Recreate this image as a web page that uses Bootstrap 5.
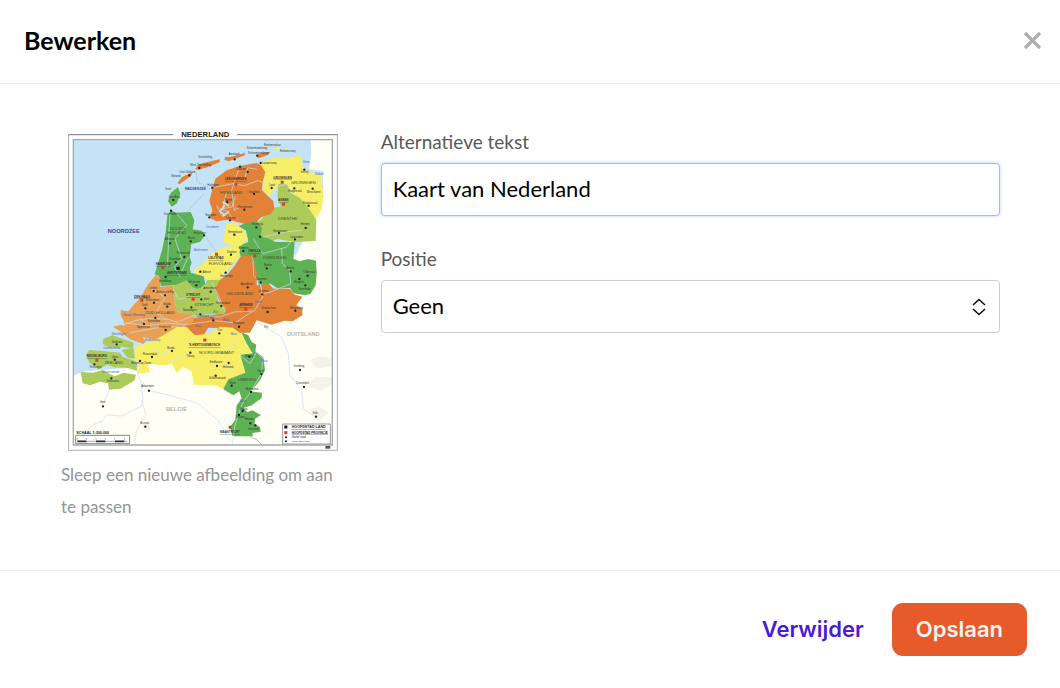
<!DOCTYPE html>
<html lang="nl">
<head>
<meta charset="utf-8">
<meta name="viewport" content="width=device-width, initial-scale=1">
<title>Bewerken</title>
<link rel="stylesheet" href="https://cdn.jsdelivr.net/npm/bootstrap@5.3.0/dist/css/bootstrap.min.css">
<style>
body{font-family:Lato,"Open Sans",sans-serif;color:#000;background:#fff}
.dialog-head{height:84px;padding:0 18px 4px 24px;border-bottom:1px solid #ececec}
.dialog-head h1{font-size:25px;line-height:32px;font-weight:700}
.close-btn{width:20px;height:20px;color:#b0b0b0}
.dialog-main{padding:45px 60px 40px 61px}
.dialog-main .row{--bs-gutter-x:20px}
.map-art{width:270px;max-width:100%;margin-left:7px}
.hint{font-size:17px;line-height:32px;color:#959595;margin-top:8px}
.field-name{font-size:19px;line-height:26px;color:#595959;margin-bottom:8px}
.field-box{height:53px;font-size:22px;line-height:32px;color:#000;padding:0 11px 2px;border-radius:4px;border:1px solid #c8ccd4}
.field-box.active-box,.field-box.active-box:focus{border-color:#a3b8f8;box-shadow:0 0 3px 1px #d5e0ff;color:#000}
.form-select.field-box{background-image:url("data:image/svg+xml,%3Csvg xmlns='http://www.w3.org/2000/svg' viewBox='0 0 14 18' fill='none' stroke='%23111' stroke-width='1.6'%3E%3Cpath d='M1 7l6-5.500 6 5.500M1 11l6 5.500 6-5.500'/%3E%3C/svg%3E");background-size:14px 18px;background-position:right 13px center}
.field-gap{margin-bottom:30px}
.dialog-foot{height:118px;padding:0 33px 0 24px;border-top:1px solid #ececec;gap:4px}
.dialog-foot .btn{font-family:Inter,sans-serif;font-weight:600;font-size:22px;line-height:32px;height:53px;padding:0 24px 2px}
.btn-remove{color:#4a1bd8}
.btn-save{background:#e75a2a;color:#f6f2f0;border-radius:11px}
.btn-save:hover{background:#d24d20;color:#fff}
.map-art text{font-family:"Liberation Sans",Arial,sans-serif}
</style>
</head>
<body>
<main class="d-flex flex-column min-vh-100">
<header class="dialog-head d-flex align-items-center justify-content-between">
<h1 class="m-0">Bewerken</h1>
<button type="button" class="close-btn btn p-0 border-0 d-flex" aria-label="Sluiten"><svg width="20" height="20" viewBox="0 0 20 20" stroke="currentColor" stroke-width="3.4" aria-hidden="true"><path d="M3 3l15 15M18 3l-15 15"/></svg></button>
</header>
<form class="dialog-main flex-grow-1">
<div class="row">
<div class="col-4 pe-4">
<svg class="map-art d-block" viewBox="24 21 810 966" role="img" aria-label="Kaart van Nederland">
<path d="M340 38H25.500V985.500H832.500V38H531" fill="none" stroke="#777" stroke-width="3"/>
<path d="M25.500 40V985.500H832.500V40" fill="none" stroke="#bbb" stroke-width="4"/>
<text x="364" y="44" font-size="23" font-weight="700" fill="#222">NEDERLAND</text>
<path d="M40 53H817V969H40z" fill="#c5e3f7"/>
<!-- land around the country -->
<path d="M40 760L75 748L240 735L600 590L745 330L790 210L789 170L750 168L748 132L754 98L752 53H817V969H40z" fill="#fffff5"/>
<path d="M737 140l52 8v24l-24-3-22-14z" fill="#c5e3f7"/>
<path d="M748 715l30-12 39 6v22l-45 9zM745 790l18-24 54-2v22l-34 20zM750 860l32-5 24 18-22 18-25-8zM245 908l20-3 10 8-8 18-15-4z" fill="#f3f3e9"/>
<!-- Groningen, Drenthe -->
<path d="M602 122L640 108L690 106L722 101L727 130L742 146L787 165L786 190L790 220L785 262L767 292L740 250L700 215L680 187H655L628 222L612 210L606 178z" fill="#f6ee66"/>
<path d="M655 186h25l12 26 28 17 23 26 26 38-2 64-65 3-48-9-32 12-37-21-2-38 20-10 24-35 35-5-10-32z" fill="#abcb5b"/>
<!-- Friesland and the islands -->
<path d="M458 197L466 170L500 145L540 132L590 123L603 130L616 150L608 180L606 205L640 238L643 262L632 277L603 286L590 300L556 306L505 293L470 298L449 287L457 265L448 238z" fill="#e38237"/>
<path d="M352 183L366 165L398 150L393 162L371 178L358 187zM405 140L418 126L455 117L478 112L480 120L444 135L414 144zM494 105l16 0 46-13-2 8-48 18-12-4zM588 100l18-8 26-3-10 11-27 9z" fill="#e38237"/>
<path d="M640 78l15-2 8 6-14 2zM672 76l16 2-10 4z" fill="#f6ee66"/>
<!-- Overijssel -->
<path d="M555 304L590 298L606 318L602 342L628 351L646 360H704L700 410L718 418L745 411L768 416L770 455L767 490L752 515L735 520L700 514L690 498L655 500L632 485L598 490L585 460L582 420L575 402L545 408L534 384L540 370L565 360L558 325L530 315z" fill="#5fb254"/>
<!-- Noord-Holland and Texel -->
<path d="M354 195L361 215L350 245L335 254L324 238L332 213zM333 263L348 272L392 270L403 295L398 322L425 326L435 340L420 360L394 366L389 405L395 422L389 438L393 453L430 460L436 486L416 505L390 492L378 477L348 490L302 492L297 462L284 457L306 385L317 330L322 280z" fill="#5fb254"/>
<!-- Flevoland -->
<path d="M497 308L520 301L550 322L564 350L544 371L512 371L490 360zM402 445L425 428L455 395L486 378L530 371L540 382L536 407L498 450L472 480L456 482L430 462L405 456z" fill="#f6ee66"/>
<!-- Gelderland, Utrecht, Zuid-Holland -->
<path d="M574 402L590 450L590 490L626 485L640 500H690L702 517L727 524L709 550L727 560V580L698 598L674 596L635 608L590 595L570 632L544 632L510 640L480 618L445 617L430 640H395L365 622L400 588L480 575L487 555L462 500L470 480L500 460L525 430L543 402z" fill="#e38237"/>
<path d="M340 492L380 475L403 500L430 498L442 474L480 473L466 500L475 540L497 557L494 576L415 578L400 586L378 574L353 570L344 540z" fill="#abcb5b"/>
<path d="M288 458L302 470L300 494L339 492L345 545L354 570L402 578L400 600L360 618L330 640L280 652L227 642L196 620L190 595L182 580V565L205 568L212 559L240 528L263 488zM159 614L185 608L228 627L258 657L250 666L210 652L180 628z" fill="#eb9f55"/>
<!-- Noord-Brabant and Limburg -->
<path d="M225 675L290 652L350 615H380L405 640L445 635L480 614L518 617L545 636L560 670L580 690L541 698L556 754L505 772L495 803L468 790L402 788L394 748L370 735L350 752L335 724L320 730L292 728L262 724L270 750L232 756L237 730L222 712z" fill="#f6ee66"/>
<path d="M543 630L565 640L575 660L589 668L586 688L610 706L615 744L600 775L573 808L606 812L605 828L575 850L550 858L562 870L577 865L603 879L585 890L584 905L600 915L602 930L578 933V943L518 943L510 915L526 893L530 850L545 830L538 808L520 820L490 802L505 772L556 752L541 698L578 694L560 665z" fill="#5fb254"/>
<!-- Zeeland -->
<path d="M130 650L158 640L221 662L219 680L185 674L148 677L128 665zM78 698L88 684L128 687L180 692L188 704L227 718L233 747L200 737L160 736L142 727L118 742L88 722zM62 750L100 752L125 745L165 763L190 752L228 758L224 775L182 800L147 803L144 784L120 779L90 790L68 784zM184 684l36-7 5 33-22-3z" fill="#abcb5b"/>
<!-- rivers, borders and coast details -->
<g fill="none" stroke="#c5e3f7" stroke-width="2">
<path d="M458 197l60-12 35 6 40-15 60 17 45-10M500 210l-12 50 28-5 10-32M535 145l-20 60 8 60 17-10M480 260l22 8 15 20M470 250l15 30M553 175l10-38 28 5M610 345l65-15 50-5M580 350l28 45 72-20 15-18M665 380l2 45 22 20 3 40-60 25-25 5-6-30-20-25-2-40M602 490l6 35-25 42-60 3-45 15-75-5-50 20-30-8-45-3-50 6-35 12M195 603l70 8 60-8 50 5 90-12 60 7 52-35M210 632l85-15 60-3M540 700l30 25 20-35 18 20-3 44-30 50-30 45-20 60-8 57M330 275l-8 160M350 275l30 35-35 40 20 60-22 25 18 30M384 405l-18 42M340 502l15 30 25-5 20-25M455 480l20 40 20 50M275 500l40 25-25 45 30 25M240 590l20 15M275 680l40 20 20-40M500 690l30-30M515 760l-20-40M335 720l50-25"/>
</g>
<path d="M495 250l-15 18 16 12M507 268l-20 15M488 240l20 12" fill="none" stroke="#c5e3f7" stroke-width="5"/>
<path d="M230 745l12 35 7 48-5 25-30 14-30 15-45-3-12 18-30 12-25 30-32 15M245 835l12 42-28 50-7 42M242 775l25 30 80 20 65 18 60 50 40 65M590 600l75 45 20 50 5 65 35 45 5 55 55 40 30 22M148 805l-15 32" fill="none" stroke="#d6e9f5" stroke-width="3"/>
<path d="M410 150v28l55 30M432 215l-60 65M432 335l65 100" fill="none" stroke="#8fa8b8" stroke-width="2" stroke-dasharray="4 3"/>
<path d="M570 944l20 9 15 15" fill="none" stroke="#999" stroke-width="2"/>
<!-- towns -->
<path d="M340 234h0M333 266h0M330 364h0M392 358h0M373 405h0M347 421h0M317 465h0M409 490h0M452 509h0M421 449h0M424 532h0M394 556h0M421 577h0M484 552h0M460 595h0M537 614h0M281 507h0M315 520h0M282 542h0M256 559h0M322 554h0M286 588h0M252 606h0M317 624h0M523 338h0M513 398h0M497 452h0M550 387h0M563 496h0M607 517h0M623 570h0M706 566h0M620 439h0M692 448h0M718 471h0M743 461h0M736 490h0M602 481h0M589 316h0M600 344h0M657 333h0M705 352h0M737 318h0M746 251h0M635 198h0M703 199h0M758 200h0M733 143h0M602 123h0M582 216h0M553 263h0M502 240h0M457 197h0M448 286h0M510 295h0M540 134h0M563 150h0M524 112h0M592 101h0M418 138h0M388 160h0M432 340h0M478 634h0M506 723h0M471 732h0M467 761h0M391 692h0M336 687h0M276 705h0M240 717h0M170 667h0M164 713h0M103 727h0M154 769h0M568 704h0M604 756h0M515 791h0M573 810h0M548 867h0M537 879h0M571 904h0M586 910h0M720 744h0M732 795h0M768 884h0M267 806h0M129 853h0M256 914h0" fill="none" stroke="#222" stroke-width="7" stroke-linecap="round"/>
<path d="M523 187h9M662 181h9M666 247h9M580 401h9M465 397h9M304 438h9M241 535h9M395 532h9M553 562h9M430 654h9M106 715h9M506 916h9" stroke="#df3c30" stroke-width="9"/>
<path d="M349 439h10" stroke="#111" stroke-width="9"/>
<!-- names of water and neighbouring countries -->
<g font-weight="700"><g fill="#3842a5"><text x="143" y="332" font-size="17">NOORDZEE</text><text x="374" y="205" font-size="10">WADDENZEE</text></g><g fill="#b4b4ac"><text x="681" y="643" font-size="17">DUITSLAND</text><text x="318" y="867" font-size="17">BELGIË</text></g></g>
<g font-size="8" font-style="italic" fill="#3c61ae"><text x="438" y="318">IJsselmeer</text><text x="401" y="387">Markermeer</text><text x="190" y="582">Nieuwe Waterweg</text><text x="155" y="640">Grevelingen</text><text x="130" y="680">Oosterschelde</text><text x="126" y="754">Westerschelde</text><text x="255" y="657">Hollandsdiep</text><text x="405" y="614">Waal</text><text x="488" y="598">Waal</text><text x="460" y="573">Rijn</text><text x="512" y="640">Maas</text><text x="604" y="720">Maas</text><text x="540" y="840">Maas</text><text x="612" y="618">Rijn</text><text x="730" y="123">Eems</text><text x="765" y="160">Dollard</text><text x="585" y="543">IJssel</text></g>
<!-- provinces -->
<g font-size="12" fill="#38512c"><text x="480" y="215">FRIESLAND</text><text x="693" y="186">GRONINGEN</text><text x="654" y="293">DRENTHE</text><text x="608" y="412">OVERIJSSEL</text><text x="446" y="430">FLEVOLAND</text><text x="330" y="325">NOORD-</text><text x="322" y="336">HOLLAND</text><text x="499" y="518">GELDERLAND</text><text x="404" y="553">UTRECHT</text><text x="256" y="575">ZUID-HOLLAND</text><text x="417" y="697">NOORD-BRABANT</text><text x="134" y="726">ZEELAND</text><text x="533" y="778">LIMBURG</text></g>
<!-- provincial capitals -->
<g font-size="9" font-weight="700" fill="#333" text-decoration="underline"><text x="495" y="175">LEEUWARDEN</text><text x="640" y="170">GRONINGEN</text><text x="654" y="238">ASSEN</text><text x="565" y="391">ZWOLLE</text><text x="445" y="412">LELYSTAD</text><text x="287" y="429">HAARLEM</text><text x="321" y="457">AMSTERDAM</text><text x="222" y="527">DEN HAAG</text><text x="378" y="523">UTRECHT</text><text x="538" y="553">ARNHEM</text><text x="386" y="673">'S-HERTOGENBOSCH</text><text x="80" y="705">MIDDELBURG</text><text x="480" y="934">MAASTRICHT</text></g>
<g font-size="8" fill="#333"><text x="326" y="229">Den Burg</text><text x="312" y="280">Den Helder</text><text x="315" y="205">Texel</text><text x="333" y="165">Vlieland</text><text x="358" y="153">Oost-Vlieland</text><text x="390" y="133">West-Terschelling</text><text x="414" y="108">Terschelling</text><text x="506" y="98">Ameland</text><text x="560" y="82">Schiermonnikoog</text><text x="612" y="72">Rottumerplaat</text><text x="660" y="91">Rottumeroog</text><text x="564" y="96">Schiermonnikoog</text><text x="606" y="125">Lauwersoog</text><text x="315" y="355">Alkmaar</text><text x="383" y="350">Hoorn</text><text x="401" y="337">Enkhuizen</text><text x="350" y="397">Purmerend</text><text x="328" y="413">Zaandam</text><text x="297" y="479">Hoofddorp</text><text x="385" y="483">Hilversum</text><text x="430" y="501">Amersfoort</text><text x="428" y="452">Almere</text><text x="431" y="535">Zeist</text><text x="369" y="568">Nieuwegein</text><text x="468" y="546">Veenendaal</text><text x="268" y="500">Leiden</text><text x="289" y="513">Alphen a/d Rijn</text><text x="257" y="536">Zoetermeer</text><text x="246" y="553">Delft</text><text x="309" y="548">Gouda</text><text x="263" y="600">Rotterdam</text><text x="230" y="618">Spijkenisse</text><text x="297" y="618">Dordrecht</text><text x="407" y="584">Culemborg</text><text x="449" y="590">Tiel</text><text x="519" y="607">Nijmegen</text><text x="505" y="332">Emmeloord</text><text x="501" y="392">Dronten</text><text x="481" y="464">Harderwijk</text><text x="536" y="380">Kampen</text><text x="542" y="489">Apeldoorn</text><text x="596" y="510">Zutphen</text><text x="605" y="562">Doetinchem</text><text x="689" y="561">Winterswijk</text><text x="612" y="432">Raalte</text><text x="678" y="441">Almelo</text><text x="702" y="484">Hengelo</text><text x="730" y="454">Oldenzaal</text><text x="716" y="503">Enschede</text><text x="588" y="474">Deventer</text><text x="575" y="310">Steenwijk</text><text x="640" y="329">Hoogeveen</text><text x="690" y="347">Coevorden</text><text x="722" y="309">Emmen</text><text x="728" y="247">Stadskanaal</text><text x="628" y="191">Leek</text><text x="684" y="210">Hoogezand</text><text x="740" y="212">Winschoten</text><text x="722" y="153">Delfzijl</text><text x="566" y="212">Drachten</text><text x="533" y="258">Heerenveen</text><text x="494" y="237">Sneek</text><text x="442" y="191">Harlingen</text><text x="436" y="283">Stavoren</text><text x="498" y="290">Lemmer</text><text x="529" y="144">Dokkum</text><text x="472" y="627">Oss</text><text x="449" y="723">Eindhoven</text><text x="488" y="739">Helmond</text><text x="447" y="771">Valkenswaard</text><text x="379" y="704">Tilburg</text><text x="322" y="681">Breda</text><text x="249" y="698">Roosendaal</text><text x="214" y="727">Bergen op Zoom</text><text x="155" y="662">Zierikzee</text><text x="156" y="708">Goes</text><text x="88" y="739">Vlissingen</text><text x="139" y="779">Terneuzen</text><text x="555" y="704">Venray</text><text x="592" y="750">Venlo</text><text x="507" y="785">Weert</text><text x="557" y="804">Roermond</text><text x="539" y="863">Sittard</text><text x="528" y="889">Geleen</text><text x="554" y="894">Heerlen</text><text x="565" y="923">Kerkrade</text><text x="701" y="735">Duisburg</text><text x="709" y="785">Düsseldorf</text><text x="758" y="875">Köln</text><text x="244" y="796">Antwerpen</text><text x="119" y="844">Gent</text><text x="241" y="906">Brussel</text></g>
<!-- scale and legend -->
<text x="49" y="935" font-size="11" font-weight="700" fill="#222">SCHAAL 1:300.000</text>
<path d="M47 940H209V965H47z" fill="#fff" stroke="#888" stroke-width="3"/><path d="M52 958h150M52 948v5M80 948v5M108 948v5M136 948v5M164 948v5M194 948v5" stroke="#aaa" stroke-width="3"/><path d="M52 958h27M108 958h28M165 958h28" stroke="#333" stroke-width="5"/>
<path d="M668 906H811V966H668z" fill="#fff" stroke="#999" stroke-width="3"/><path d="M673 915h9" stroke="#111" stroke-width="9"/><path d="M673 932h9" stroke="#df3c30" stroke-width="9"/><path d="M678 946h0M678 958h0" stroke="#111" stroke-width="6" stroke-linecap="round"/>
<g fill="#222"><g font-weight="700" text-decoration="underline"><text x="695" y="919" font-size="11">HOOFDSTAD LAND</text><text x="695" y="935" font-size="9">HOOFDSTAD PROVINCIE</text></g><text x="695" y="949" font-size="9">Grote stad</text><text x="695" y="961" font-size="7">Kleine stad / dorp</text></g>
<path d="M40 53H817V969H40z" fill="none" stroke="#a5a9aa" stroke-width="4"/><path d="M796 972h15v8h-15z" fill="#555"/>
</svg>
<p class="hint mb-0">Sleep een nieuwe afbeelding om aan te passen</p>
</div>
<div class="col-8">
<div class="field-gap">
<label class="field-name d-block" for="alt">Alternatieve tekst</label>
<input id="alt" type="text" class="form-control field-box active-box" value="Kaart van Nederland">
</div>
<label class="field-name d-block" for="pos">Positie</label>
<select id="pos" class="form-select field-box"><option>Geen</option><option>Links</option><option>Rechts</option></select>
</div>
</div>
</form>
<footer class="dialog-foot d-flex align-items-center justify-content-end">
<button type="button" class="btn btn-remove border-0">Verwijder</button>
<button type="button" class="btn btn-save border-0">Opslaan</button>
</footer>
</main>
<script src="https://cdn.jsdelivr.net/npm/bootstrap@5.3.0/dist/js/bootstrap.bundle.min.js"></script>
</body>
</html>
